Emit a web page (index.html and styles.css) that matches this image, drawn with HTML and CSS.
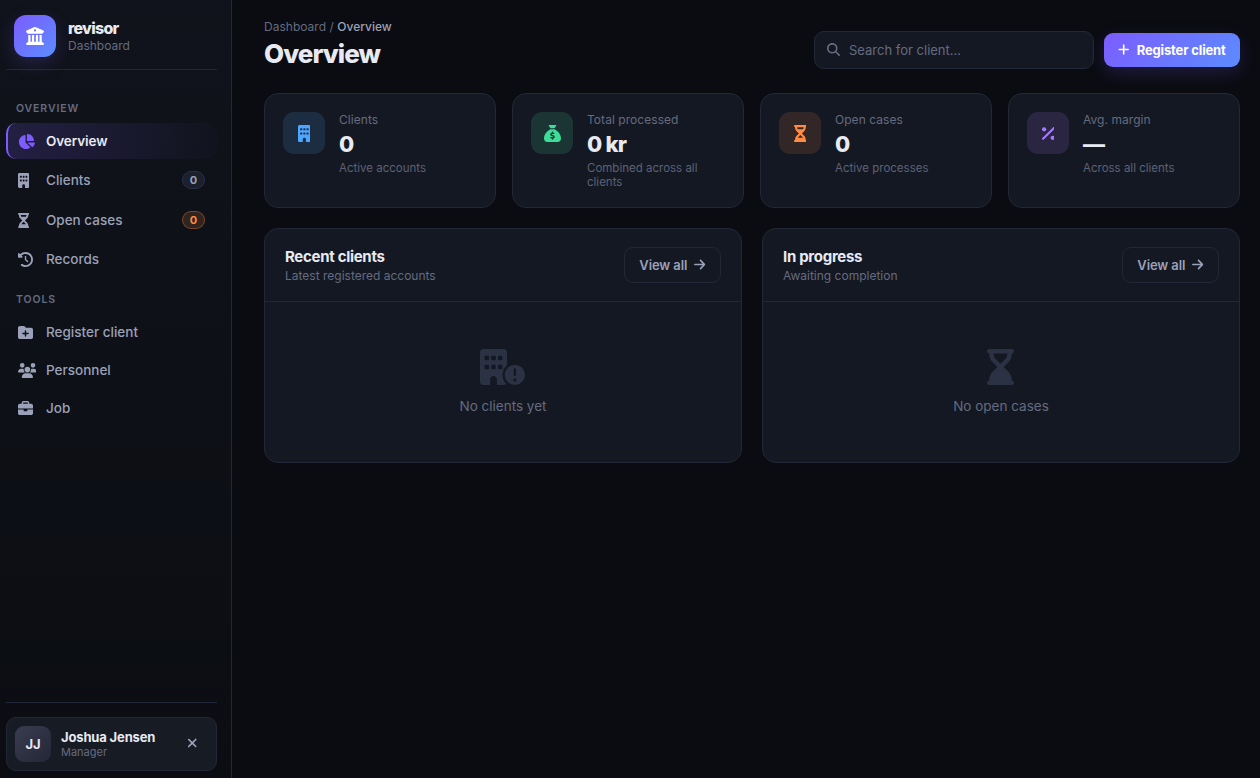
FILE: index.html
```html
<!DOCTYPE html>
<html lang="en">
<head>
<meta charset="utf-8">
<title>revisor – Overview</title>
<link rel="stylesheet" href="styles.css">
</head>
<body>
<svg class="sprite" aria-hidden="true">
  <symbol id="landmark" viewBox="0 0 512 512"><path d="M243.4 2.6l-224 96c-14 6-21.8 21-18.7 35.8S16.8 160 32 160v8c0 13.3 10.7 24 24 24H456c13.3 0 24-10.7 24-24v-8c15.2 0 28.3-10.7 31.3-25.6s-4.8-29.9-18.7-35.8l-224-96c-8-3.4-17.2-3.4-25.2 0zM128 224H64V420.3c-.6 .3-1.2 .7-1.8 1.1l-48 32c-11.7 7.8-17 22.4-12.9 35.9S17.9 512 32 512H480c14.1 0 26.5-9.2 30.6-22.7s-1.1-28.1-12.9-35.9l-48-32c-.6-.4-1.2-.7-1.8-1.1V224H384V416H344V224H280V416H232V224H168V416H128V224zM256 64a32 32 0 1 1 0 64 32 32 0 1 1 0-64z"/></symbol>
  <symbol id="pie" viewBox="0 0 576 512"><path d="M304 240V16.6c0-9 7-16.6 16-16.6C443.7 0 544 100.3 544 224c0 9-7.6 16-16.6 16H304zM32 272C32 150.7 122.1 50.3 239 34.3c9.2-1.3 17 6.1 17 15.4V288L412.5 444.5c6.7 6.7 6.2 17.7-1.5 23.1C371.8 495.6 323.8 512 272 512C139.5 512 32 404.6 32 272zm526.4 16c9.3 0 16.6 7.8 15.4 17c-7.7 55.9-34.6 105.6-73.9 142.3c-6 5.6-15.4 5.2-21.2-.7L320 288H558.4z"/></symbol>
  <symbol id="building" viewBox="0 0 384 512"><path fill-rule="evenodd" d="M48 0C21.5 0 0 21.5 0 48V464c0 26.5 21.5 48 48 48h96V432c0-26.5 21.5-48 48-48s48 21.5 48 48v80h96c26.5 0 48-21.5 48-48V48c0-26.5-21.5-48-48-48zM80 96h32q16 0 16 16v32q0 16-16 16H80q-16 0-16-16v-32q0-16 16-16zM176 96h32q16 0 16 16v32q0 16-16 16h-32q-16 0-16-16v-32q0-16 16-16zM272 96h32q16 0 16 16v32q0 16-16 16h-32q-16 0-16-16v-32q0-16 16-16zM80 224h32q16 0 16 16v32q0 16-16 16H80q-16 0-16-16v-32q0-16 16-16zM176 224h32q16 0 16 16v32q0 16-16 16h-32q-16 0-16-16v-32q0-16 16-16zM272 224h32q16 0 16 16v32q0 16-16 16h-32q-16 0-16-16v-32q0-16 16-16z"/></symbol>
  <symbol id="building-alert" viewBox="0 0 640 512"><path fill-rule="evenodd" d="M48 0C21.5 0 0 21.5 0 48V464c0 26.5 21.5 48 48 48h96V432c0-26.5 21.5-48 48-48s48 21.5 48 48v80h96c15.1 0 28.5-6.9 37.3-17.8C340.4 462.2 320 417.5 320 368c0-54.7 24.9-103.5 64-135.8V48c0-26.5-21.5-48-48-48zM80 96h32q16 0 16 16v32q0 16-16 16H80q-16 0-16-16v-32q0-16 16-16zM176 96h32q16 0 16 16v32q0 16-16 16h-32q-16 0-16-16v-32q0-16 16-16zM272 96h32q16 0 16 16v32q0 16-16 16h-32q-16 0-16-16v-32q0-16 16-16zM80 224h32q16 0 16 16v32q0 16-16 16H80q-16 0-16-16v-32q0-16 16-16zM176 224h32q16 0 16 16v32q0 16-16 16h-32q-16 0-16-16v-32q0-16 16-16zM272 224h32q16 0 16 16v32q0 16-16 16h-32q-16 0-16-16v-32q0-16 16-16zM640 368a144 144 0 1 1-288 0 144 144 0 1 1 288 0zM496 416a24 24 0 1 0 0 48 24 24 0 1 0 0-48zM496 272c-8.800 0-16 7.200-16 16v80c0 8.800 7.200 16 16 16s16-7.200 16-16v-80c0-8.800-7.200-16-16-16z"/></symbol>
  <symbol id="hourglass" viewBox="0 0 384 512"><path fill-rule="evenodd" d="M32 0C14.300 0 0 14.300 0 32S14.300 64 32 64V75c0 42.400 16.900 83.100 46.900 113.100L146.700 256 78.900 323.900C48.900 353.900 32 394.600 32 437v11c-17.700 0-32 14.300-32 32s14.300 32 32 32H352c17.700 0 32-14.300 32-32s-14.300-32-32-32V437c0-42.400-16.900-83.100-46.900-113.100L237.300 256l67.900-67.900c30-30 46.900-70.700 46.900-113.100V64c17.700 0 32-14.300 32-32s-14.300-32-32-32zM96 75V64H288V75c0 19-5.600 37.400-16 53H112c-10.300-15.600-16-34-16-53zM112 384c3.500-5.300 7.600-10.300 12.100-14.900L192 301.300l67.900 67.900c4.600 4.600 8.600 9.600 12.100 14.900z"/></symbol>
  <symbol id="hourglass-end" viewBox="0 0 384 512"><path fill-rule="evenodd" d="M32 0C14.300 0 0 14.300 0 32S14.300 64 32 64V75c0 42.400 16.900 83.100 46.900 113.100L146.700 256 78.900 323.900C48.900 353.900 32 394.600 32 437v11c-17.700 0-32 14.300-32 32s14.300 32 32 32H352c17.700 0 32-14.300 32-32s-14.300-32-32-32V437c0-42.400-16.900-83.100-46.900-113.100L237.300 256l67.900-67.900c30-30 46.900-70.700 46.900-113.100V64c17.700 0 32-14.300 32-32s-14.300-32-32-32zM96 75V64H288V75c0 25.500-10.100 49.900-28.100 67.900L192 210.700l-67.900-67.900C106.100 124.900 96 100.400 96 75z"/></symbol>
  <symbol id="history" viewBox="0 0 512 512"><path d="M75 75L41 41C25.900 25.900 0 36.600 0 57.900V168c0 13.300 10.700 24 24 24H134.100c21.400 0 32.100-25.900 17-41l-30.800-30.800C155 85.500 203 64 256 64c106 0 192 86 192 192s-86 192-192 192c-40.800 0-78.600-12.700-109.700-34.400c-14.500-10.100-34.400-6.600-44.600 7.900s-6.600 34.400 7.900 44.600C151.200 495 201.700 512 256 512c141.400 0 256-114.600 256-256S397.400 0 256 0C185.300 0 121.300 28.700 75 75zm181 53c-13.300 0-24 10.700-24 24V256c0 6.400 2.500 12.500 7 17l72 72c9.400 9.400 24.600 9.400 33.900 0s9.400-24.600 0-33.900l-65-65V152c0-13.300-10.700-24-24-24z"/></symbol>
  <symbol id="folder-plus" viewBox="0 0 512 512"><path fill-rule="evenodd" d="M512 416c0 35.300-28.700 64-64 64H64c-35.300 0-64-28.700-64-64V96C0 60.700 28.700 32 64 32H192c20.100 0 39.100 9.500 51.200 25.600l19.200 25.600c6 8.100 15.500 12.800 25.600 12.800H448c35.300 0 64 28.700 64 64V416zM232 376c0 13.300 10.700 24 24 24s24-10.700 24-24V312h64c13.300 0 24-10.700 24-24s-10.700-24-24-24H280V200c0-13.300-10.700-24-24-24s-24 10.700-24 24v64H168c-13.300 0-24 10.700-24 24s10.700 24 24 24h64v64z"/></symbol>
  <symbol id="users" viewBox="0 0 640 512"><path d="M144 0a80 80 0 1 1 0 160A80 80 0 1 1 144 0zM512 0a80 80 0 1 1 0 160A80 80 0 1 1 512 0zM0 298.700C0 239.800 47.800 192 106.700 192h42.700c15.900 0 31 3.500 44.600 9.700c-1.300 7.200-1.900 14.700-1.900 22.300c0 38.200 16.800 72.500 43.300 96H21.300C9.600 320 0 310.400 0 298.700zM404.600 320c26.600-23.500 43.300-57.800 43.300-96c0-7.600-.7-15-1.900-22.300c13.600-6.300 28.700-9.700 44.600-9.700h42.700C592.200 192 640 239.800 640 298.700c0 11.800-9.600 21.300-21.300 21.300zM224 224a96 96 0 1 1 192 0 96 96 0 1 1-192 0zM128 485.300C128 411.700 187.700 352 261.300 352H378.700C452.300 352 512 411.700 512 485.300c0 14.700-11.900 26.700-26.700 26.700H154.700c-14.700 0-26.700-11.900-26.700-26.700z"/></symbol>
  <symbol id="briefcase" viewBox="0 0 512 512"><path fill-rule="evenodd" d="M184 48H328c4.400 0 8 3.600 8 8V96H176V56c0-4.400 3.600-8 8-8zm-56 8V96H64C28.700 96 0 124.700 0 160v96H512V160c0-35.300-28.700-64-64-64H384V56c0-30.900-25.100-56-56-56H184c-30.900 0-56 25.100-56 56zM512 288H320v32c0 17.700-14.300 32-32 32H224c-17.700 0-32-14.300-32-32V288H0V416c0 35.300 28.700 64 64 64H448c35.300 0 64-28.700 64-64V288z"/></symbol>
  <symbol id="sack" viewBox="0 0 512 512"><path fill-rule="evenodd" d="M320 96H192L144.600 24.900C137.500 14.200 145.100 0 157.900 0H354.100c12.800 0 20.400 14.200 13.300 24.900L320 96zM192 128H320c3.800 2.500 8.100 5.300 13 8.400C389.700 172.700 512 250.900 512 416c0 53-43 96-96 96H96c-53 0-96-43-96-96C0 250.900 122.300 172.700 179 136.400c4.800-3.100 9.200-5.900 13-8.400zm84 88c0-11-9-20-20-20s-20 9-20 20v14c-7.600 1.700-15.200 4.400-22.200 8.500c-13.900 8.300-25.900 22.800-25.800 43.900c.1 20.300 12 33.100 24.700 40.700c11 6.600 24.700 10.800 35.600 14l1.700 .5c12.600 3.800 21.800 6.800 28 10.700c5.100 3.200 5.800 5.400 5.900 8.200c.1 5-1.800 8-5.900 10.500c-5 3.100-12.900 5-21.400 4.700c-11.100-.4-21.500-3.900-35.100-8.500c-2.300-.8-4.700-1.600-7.200-2.400c-10.500-3.500-21.800 2.200-25.300 12.600s2.200 21.800 12.600 25.300c1.900 .6 4 1.300 6.100 2.100c8.300 2.900 17.900 6.200 28.200 8.400V424c0 11 9 20 20 20s20-9 20-20V410.200c8-1.700 16-4.500 23.200-9c14.300-8.900 25.100-24.100 24.800-45c-.3-20.300-11.700-33.400-24.600-41.600c-11.500-7.200-25.900-11.600-37.100-15l-.7-.2c-12.800-3.900-21.900-6.700-28.300-10.500c-5.200-3.100-5.300-4.900-5.300-6.700c0-3.700 1.400-6.500 6.200-9.300c5.400-3.200 13.600-5.100 21.500-5c9.600 .1 20.200 2.200 31.200 5.200c10.700 2.800 21.600-3.500 24.500-14.200s-3.500-21.600-14.200-24.500c-6.500-1.700-13.700-3.400-21.100-4.700V216z"/></symbol>
  <symbol id="percent" viewBox="0 0 384 512"><path d="M374.600 118.600c12.500-12.500 12.500-32.800 0-45.300s-32.800-12.500-45.300 0l-320 320c-12.500 12.500-12.500 32.800 0 45.300s32.800 12.500 45.300 0l320-320z"/><circle cx="64" cy="128" r="64"/><circle cx="320" cy="384" r="64"/></symbol>
  <symbol id="search" viewBox="0 0 512 512"><path fill-rule="evenodd" d="M416 208c0 45.900-14.900 88.300-40 122.700L502.600 457.400c12.500 12.500 12.500 32.800 0 45.300s-32.800 12.500-45.300 0L330.700 376c-34.400 25.200-76.800 40-122.700 40C93.100 416 0 322.900 0 208S93.100 0 208 0S416 93.100 416 208zM208 352a144 144 0 1 0 0-288 144 144 0 1 0 0 288z"/></symbol>
  <symbol id="plus" viewBox="0 0 448 512"><path d="M256 80c0-17.700-14.300-32-32-32s-32 14.300-32 32V224H48c-17.700 0-32 14.300-32 32s14.300 32 32 32H192V432c0 17.700 14.300 32 32 32s32-14.300 32-32V288H400c17.700 0 32-14.300 32-32s-14.300-32-32-32H256V80z"/></symbol>
  <symbol id="arrow" viewBox="0 0 448 512"><path d="M438.600 278.600c12.500-12.500 12.500-32.800 0-45.300l-160-160c-12.500-12.500-32.800-12.500-45.300 0s-12.500 32.800 0 45.300L338.800 224 32 224c-17.700 0-32 14.300-32 32s14.300 32 32 32l306.700 0L233.400 393.400c-12.500 12.500-12.500 32.800 0 45.300s32.800 12.500 45.300 0l160-160z"/></symbol>
  <symbol id="xmark" viewBox="0 0 384 512"><path d="M342.600 150.600c12.500-12.500 12.500-32.800 0-45.300s-32.800-12.500-45.300 0L192 210.700 86.600 105.400c-12.500-12.500-32.800-12.500-45.300 0s-12.500 32.800 0 45.300L146.700 256 41.400 361.400c-12.500 12.500-12.500 32.800 0 45.300s32.800 12.500 45.300 0L192 301.300 297.400 406.600c12.500 12.500 32.800 12.500 45.300 0s12.500-32.800 0-45.300L237.300 256 342.600 150.600z"/></symbol>
</svg>
<div class="app">
  <aside class="sidebar">
    <div class="brand">
      <div class="brand-logo"><svg class="i-landmark"><use href="#landmark"/></svg></div>
      <div>
        <div class="brand-name">revisor</div>
        <div class="brand-sub">Dashboard</div>
      </div>
    </div>
    <nav class="nav">
      <div class="nav-label">OVERVIEW</div>
      <a class="nav-item active"><span class="nav-icon"><svg class="w-pie"><use href="#pie"/></svg></span>Overview</a>
      <a class="nav-item"><span class="nav-icon"><svg class="w-narrow"><use href="#building"/></svg></span>Clients<span class="badge">0</span></a>
      <a class="nav-item"><span class="nav-icon"><svg class="w-narrow"><use href="#hourglass"/></svg></span>Open cases<span class="badge badge-warn">0</span></a>
      <a class="nav-item"><span class="nav-icon"><svg class="w-square"><use href="#history"/></svg></span>Records</a>
      <div class="nav-label">TOOLS</div>
      <a class="nav-item"><span class="nav-icon"><svg class="w-square"><use href="#folder-plus"/></svg></span>Register client</a>
      <a class="nav-item"><span class="nav-icon"><svg class="w-wide"><use href="#users"/></svg></span>Personnel</a>
      <a class="nav-item"><span class="nav-icon"><svg class="w-square"><use href="#briefcase"/></svg></span>Job</a>
    </nav>
    <div class="sidebar-foot">
      <div class="user">
        <div class="avatar">JJ</div>
        <div class="user-text">
          <div class="user-name">Joshua Jensen</div>
          <div class="user-role">Manager</div>
        </div>
        <svg class="i-close"><use href="#xmark"/></svg>
      </div>
    </div>
  </aside>
  <main class="main">
    <header class="topbar">
      <div>
        <div class="crumbs">Dashboard / <span>Overview</span></div>
        <h1 class="title">Overview</h1>
      </div>
      <div class="actions">
        <div class="search"><svg class="i-search"><use href="#search"/></svg><span>Search for client...</span></div>
        <div class="btn-primary"><svg class="i-plus"><use href="#plus"/></svg>Register client</div>
      </div>
    </header>
    <section class="stats">
      <div class="card stat">
        <div class="stat-icon blue"><svg class="s-narrow"><use href="#building"/></svg></div>
        <div><div class="stat-label">Clients</div><div class="stat-value">0</div><div class="stat-note">Active accounts</div></div>
      </div>
      <div class="card stat">
        <div class="stat-icon green"><svg class="s-square"><use href="#sack"/></svg></div>
        <div><div class="stat-label">Total processed</div><div class="stat-value">0 kr</div><div class="stat-note">Combined across all clients</div></div>
      </div>
      <div class="card stat">
        <div class="stat-icon orange"><svg class="s-narrow"><use href="#hourglass"/></svg></div>
        <div><div class="stat-label">Open cases</div><div class="stat-value">0</div><div class="stat-note">Active processes</div></div>
      </div>
      <div class="card stat">
        <div class="stat-icon purple"><svg class="s-narrow"><use href="#percent"/></svg></div>
        <div><div class="stat-label">Avg. margin</div><div class="stat-value">—</div><div class="stat-note">Across all clients</div></div>
      </div>
    </section>
    <section class="panels">
      <div class="card panel">
        <div class="panel-head">
          <div><div class="panel-title">Recent clients</div><div class="panel-sub">Latest registered accounts</div></div>
          <div class="btn-ghost">View all<svg class="i-arrow"><use href="#arrow"/></svg></div>
        </div>
        <div class="empty"><svg class="e-wide"><use href="#building-alert"/></svg><div class="empty-text">No clients yet</div></div>
      </div>
      <div class="card panel">
        <div class="panel-head">
          <div><div class="panel-title">In progress</div><div class="panel-sub">Awaiting completion</div></div>
          <div class="btn-ghost">View all<svg class="i-arrow"><use href="#arrow"/></svg></div>
        </div>
        <div class="empty"><svg class="e-narrow"><use href="#hourglass-end"/></svg><div class="empty-text">No open cases</div></div>
      </div>
    </section>
  </main>
</div>
</body>
</html>
```

FILE: styles.css
```css
* { box-sizing: border-box; }
body {
  margin: 0;
  background: #0a0c11;
  color: #e8eaf2;
  font-family: Inter, "Liberation Sans", sans-serif;
  font-size: 14px;
}
svg { display: block; flex: none; fill: currentColor; }
.sprite { display: none; }
.app { display: flex; height: 778px; overflow: hidden; }

.sidebar {
  width: 232px;
  flex: none;
  display: flex;
  flex-direction: column;
  padding: 0 14px 7px 6px;
  border-right: 1px solid #232838;
  background: linear-gradient(180deg, #10131b 0%, #0b0d12 100%);
}
.brand {
  display: flex;
  align-items: center;
  gap: 12px;
  height: 70px;
  padding: 15px 8px 12px;
  border-bottom: 1px solid #232838;
}
.brand-logo {
  width: 42px;
  height: 42px;
  display: flex;
  align-items: center;
  justify-content: center;
  border-radius: 12px;
  color: #fff;
  background: linear-gradient(135deg, #7c5cff, #5b8cff);
  box-shadow: 0 6px 18px rgba(124, 92, 255, 0.2);
}
.i-landmark { width: 18px; height: 18px; margin-bottom: 1px; }
.brand-name { font-size: 16px; font-weight: 800; line-height: 17px; letter-spacing: -0.75px; }
.brand-sub { padding-top: 1px; font-size: 12px; line-height: 15px; color: #656b80; }

.nav { display: flex; flex-direction: column; gap: 2px; flex: 1; padding-top: 16px; }
.nav-label {
  height: 35px;
  padding: 15px 10px 0;
  font-size: 10.5px;
  font-weight: 600;
  line-height: 16px;
  letter-spacing: 0.9px;
  color: #656b80;
}
.nav-label:not(:first-child) { height: 33px; padding-top: 13px; }
.nav-item {
  display: flex;
  align-items: center;
  height: 36px;
  padding: 0 12px 0 11.5px;
  border-radius: 10px;
  font-size: 13.5px;
  font-weight: 500;
  color: #9aa1b8;
}
.nav-item:has(.badge) { height: 38px; }
.nav-item.active {
  padding-left: 10px;
  border-left: 2px solid #7c5cff;
  color: #e8eaf2;
  font-weight: 600;
  letter-spacing: -0.1px;
  background: linear-gradient(90deg, rgba(124, 92, 255, 0.18), rgba(124, 92, 255, 0.02));
}
.nav-icon { width: 28.5px; flex: none; }
.active .nav-icon { width: 28px; color: #7c5cff; }
.nav-icon svg { height: 15px; }
.w-narrow { width: 11.25px; }
.w-square { width: 15px; }
.w-pie { width: 16.9px; }
.w-wide { width: 18.75px; }
.badge {
  margin-left: auto;
  width: 23px;
  height: 18px;
  border: 1px solid #2b3144;
  border-radius: 9px;
  background: #1b202c;
  color: #9aa1b8;
  font-size: 11px;
  font-weight: 700;
  line-height: 16px;
  text-align: center;
}
.badge-warn { color: #ff8c42; background: rgba(255, 140, 66, 0.15); border-color: rgba(255, 140, 66, 0.35); }

.sidebar-foot { border-top: 1px solid #232838; padding-top: 14px; }
.user {
  display: flex;
  align-items: center;
  height: 54px;
  padding: 0 19px 0 8px;
  border: 1px solid #232838;
  border-radius: 10px;
  background: #171b24;
}
.avatar {
  width: 36px;
  height: 36px;
  border-radius: 9px;
  background: linear-gradient(135deg, #3a3d50, #232635);
  font-size: 13px;
  font-weight: 700;
  line-height: 36px;
  text-align: center;
}
.user-text { flex: 1; padding-left: 10px; }
.user-name { font-size: 13px; font-weight: 700; line-height: 16px; letter-spacing: -0.15px; }
.user-role { font-size: 11px; line-height: 14px; color: #656b80; }
.i-close { width: 10.5px; height: 14px; margin-bottom: 2px; color: #9aa1b8; }

.main { flex: 1; min-width: 0; padding: 0 20px 0 32px; }
.topbar { display: flex; justify-content: space-between; height: 93px; padding-top: 19px; }
.crumbs { font-size: 12px; line-height: 16px; letter-spacing: 0.02px; color: #656b80; }
.crumbs span { color: #9aa1b8; font-weight: 500; }
.title { margin: 3px 0 0; font-size: 26px; font-weight: 800; line-height: 32px; letter-spacing: -0.95px; }
.actions { display: flex; align-items: center; gap: 10px; height: 38px; margin-top: 12px; }
.search {
  display: flex;
  align-items: center;
  gap: 9px;
  width: 280px;
  height: 38px;
  padding: 0 12px;
  border: 1px solid #232838;
  border-radius: 10px;
  background: #141822;
  color: #656b80;
  font-size: 13px;
}
.i-search { width: 13px; height: 13px; margin-bottom: 2px; }
.btn-primary {
  display: flex;
  align-items: center;
  justify-content: center;
  gap: 7px;
  width: 136px;
  height: 34px;
  border-radius: 9px;
  color: #fff;
  background: linear-gradient(135deg, #7c5cff, #5b8cff);
  box-shadow: 0 6px 18px rgba(124, 92, 255, 0.2);
  font-size: 13px;
  font-weight: 700;
  letter-spacing: -0.15px;
  white-space: nowrap;
}
.i-plus { width: 11.4px; height: 13px; margin-bottom: 2px; }

.card { border: 1px solid #232838; border-radius: 14px; background: #141822; }
.stats { display: grid; grid-template-columns: repeat(4, 1fr); gap: 16px; }
.stat { display: flex; gap: 14px; height: 115px; padding: 18px; }
.stat-icon {
  width: 42px;
  height: 42px;
  flex: none;
  display: flex;
  align-items: center;
  justify-content: center;
  border-radius: 11px;
}
.blue { color: #4da6ff; background: rgba(77, 166, 255, 0.15); }
.green { color: #3ddc97; background: rgba(61, 220, 151, 0.15); }
.orange { color: #ff8c42; background: rgba(255, 140, 66, 0.13); }
.purple { color: #a678ff; background: rgba(166, 120, 255, 0.15); }
.s-narrow { width: 12.75px; height: 17px; }
.s-square { width: 17px; height: 17px; }
.stat-label { font-size: 12px; line-height: 15px; letter-spacing: 0.05px; color: #656b80; }
.stat-value { margin-top: 3px; font-size: 22px; font-weight: 800; line-height: 29px; letter-spacing: -0.75px; }
.stat-note { margin-top: 2px; font-size: 11.5px; line-height: 14px; color: #5c6277; }

.panels { display: grid; grid-template-columns: 1fr 1fr; gap: 20px; margin-top: 20px; }
.panel { height: 235px; }
.panel-head {
  display: flex;
  align-items: center;
  justify-content: space-between;
  height: 73px;
  padding: 0 20px;
  border-bottom: 1px solid #232838;
}
.panel-title { font-size: 15px; font-weight: 700; line-height: 19px; letter-spacing: -0.3px; }
.panel-sub { padding-top: 1px; font-size: 12px; line-height: 17px; color: #656b80; }
.btn-ghost {
  display: flex;
  align-items: center;
  justify-content: center;
  gap: 7px;
  width: 97px;
  height: 36px;
  border: 1px solid #232838;
  border-radius: 9px;
  color: #9aa1b8;
  font-size: 13px;
  font-weight: 600;
  letter-spacing: -0.1px;
}
.i-arrow { width: 11.4px; height: 13px; margin-bottom: 2px; }
.empty { display: flex; flex-direction: column; align-items: center; padding-top: 47px; color: #656b80; }
.e-wide { width: 45px; height: 36px; margin-right: 1px; color: #2b3243; }
.e-narrow { width: 27px; height: 36px; margin-right: 1px; color: #2b3243; }
.empty-text { margin-top: 12px; font-size: 13.5px; line-height: 18px; }
```
